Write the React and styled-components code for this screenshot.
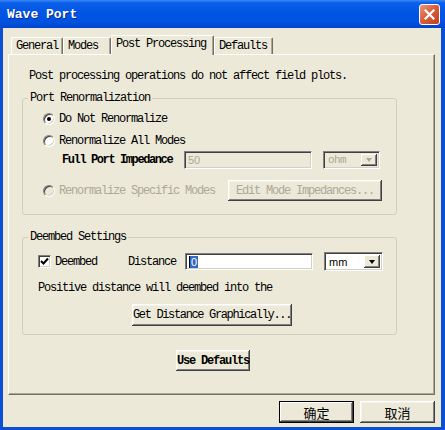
import React from 'react'
import styled, { createGlobalStyle } from 'styled-components'

const GlobalStyle = createGlobalStyle`
  html, body {
    margin: 0;
    padding: 0;
    background: #0a4fd6;
  }
  body {
    width: 445px;
    height: 430px;
    overflow: hidden;
  }
  * { box-sizing: border-box; }
`

const mono = `"Liberation Mono", "DejaVu Sans Mono", monospace`
const beige = '#ECE9D8'
const grey = '#ACA899'

const Window = styled.div`
  width: 445px;
  height: 430px;
  display: flex;
  flex-direction: column;
  background: #0a4fd6;
`

const TitleBar = styled.div`
  height: 28px;
  flex: none;
  display: flex;
  align-items: center;
  justify-content: space-between;
  padding: 1px 5px 0 7px;
  background: linear-gradient(to bottom, #3b8cf8 0%, #0b5fe9 10%, #0055e5 45%, #0052df 80%, #0043cc 100%);
`

const Title = styled.span`
  font-family: ${mono};
  font-weight: bold;
  font-size: 13px;
  color: #fff;
  text-shadow: 1px 1px #0b2a8c;
`

const CloseButton = styled.div`
  width: 21px;
  height: 21px;
  border: 1px solid #fff;
  border-radius: 3px;
  background: linear-gradient(135deg, #e9977c 0%, #d9603e 45%, #c33d1d 100%);
  display: flex;
  align-items: center;
  justify-content: center;
`

const Frame = styled.div`
  flex: 1;
  display: flex;
  padding: 0 5px 3px 3px;
`

const Body = styled.div`
  flex: 1;
  background: ${beige};
  display: flex;
  flex-direction: column;
  padding: 7px 6px 0 5px;
`

const TabStrip = styled.div`
  display: flex;
  align-items: flex-end;
  height: 19px;
  padding-left: 3px;
`

const Tab = styled.div`
  width: ${p => p.$w}px;
  height: ${p => (p.$active ? 20 : 17)}px;
  margin-bottom: ${p => (p.$active ? -1 : 0)}px;
  position: relative;
  z-index: ${p => (p.$active ? 1 : 0)};
  background: ${beige};
  border-top: 1px solid #fff;
  border-left: 1px solid #fff;
  border-right: 1px solid #716f64;
  border-radius: 2px 2px 0 0;
  box-shadow: inset -1px 0 #aca899;
  font-family: ${mono};
  font-size: 12px;
  letter-spacing: -1.2px;
  line-height: ${p => (p.$active ? 17 : 17)}px;
  padding-left: 4px;
  color: #000;
  white-space: nowrap;
`

const Panel = styled.div`
  height: 341px;
  flex: none;
  border: 1px solid;
  border-color: #fff #716f64 #716f64 #fff;
  box-shadow: inset -1px -1px #aca899;
  padding: 14px 0 0 13px;
  display: flex;
  flex-direction: column;
  width: 427px;
`

const Text = styled.div`
  font-family: ${mono};
  font-size: 12px;
  letter-spacing: ${p => p.$ls || '-1.2px'};
  line-height: 14px;
  height: 14px;
  white-space: nowrap;
  color: ${p => (p.$disabled ? grey : '#000')};
  font-weight: ${p => (p.$bold ? 'bold' : 'normal')};
`

const Intro = styled(Text)`
  padding-left: 7px;
`

const Group = styled.fieldset`
  width: 375px;
  margin: ${p => p.$mt}px 0 0 0;
  border: 1px solid #d0d0bf;
  border-radius: 3px;
  padding: ${p => p.$pt}px 0 ${p => p.$pb}px 0;
  min-width: 0;
`

const Legend = styled.legend`
  font-family: ${mono};
  font-size: 12px;
  letter-spacing: -1.2px;
  line-height: 14px;
  padding: 0 2px;
  margin-left: 5px;
  color: #000;
`

const GroupBody = styled.div`
  display: flex;
  flex-direction: column;
  padding-left: ${p => p.$pl}px;
`

const Row = styled.div`
  display: flex;
  align-items: center;
  height: ${p => p.$h}px;
  margin-top: ${p => p.$mt || 0}px;
  padding-left: ${p => p.$pl || 0}px;
`

const RadioCircle = styled.span`
  width: 12px;
  height: 12px;
  flex: none;
  border-radius: 50%;
  border: 1px solid;
  border-color: #808080 #fff #fff #808080;
  box-shadow: inset 1px 1px #404040, inset -1px -1px #d4d0c8;
  background: ${p => (p.$disabled ? beige : '#fff')};
  display: flex;
  align-items: center;
  justify-content: center;
  margin-right: 4px;
`

const Dot = styled.span`
  width: 4px;
  height: 4px;
  border-radius: 50%;
  background: #000;
`

const CheckBox = styled.span`
  width: 13px;
  height: 13px;
  flex: none;
  border: 1px solid;
  border-color: #808080 #fff #fff #808080;
  box-shadow: inset 1px 1px #404040, inset -1px -1px #d4d0c8;
  background: #fff;
  display: flex;
  align-items: center;
  justify-content: center;
  margin-right: 4px;
`

const Label = styled(Text)`
  width: ${p => p.$w}px;
  margin-right: ${p => p.$mr || 0}px;
  margin-left: ${p => p.$ml || 0}px;
  flex: none;
`

const Field = styled.div`
  width: ${p => p.$w}px;
  height: ${p => p.$h}px;
  margin-left: ${p => p.$ml || 0}px;
  flex: none;
  border: 1px solid;
  border-color: #808080 #fff #fff #808080;
  box-shadow: inset 1px 1px #404040, inset -1px -1px #d4d0c8;
  background: ${p => (p.$disabled ? beige : '#fff')};
  display: flex;
  align-items: center;
  padding: 0 3px;
  font-family: "Liberation Sans", Arial, sans-serif;
  font-size: 11px;
  color: ${p => (p.$disabled ? grey : '#000')};
`

const Selected = styled.span`
  background: #316ac5;
  color: #fff;
  line-height: 12px;
  padding: 0 1px;
  border-left: 1px solid #000;
`

const Combo = styled(Field)`
  padding: 2px 2px 2px 4px;
  justify-content: space-between;
  font-family: ${p => (p.$monoText ? mono : '"Liberation Sans", Arial, sans-serif')};
  letter-spacing: ${p => (p.$monoText ? '-0.6px' : 'normal')};
`

const DropButton = styled.span`
  width: 16px;
  height: 100%;
  flex: none;
  background: ${beige};
  box-shadow: inset -1px -1px #404040, inset 1px 1px #fff, inset -2px -2px #808080;
  display: flex;
  align-items: center;
  justify-content: center;
`

const Arrow = styled.span`
  width: 0;
  height: 0;
  border-left: 3.5px solid transparent;
  border-right: 3.5px solid transparent;
  border-top: 4px solid ${p => (p.$disabled ? grey : '#000')};
`

const Button = styled.div`
  width: ${p => p.$w}px;
  height: ${p => p.$h || 21}px;
  margin-left: ${p => p.$ml || 0}px;
  flex: none;
  background: ${beige};
  border: ${p => (p.$default ? '1px solid #000' : 'none')};
  box-shadow: ${p =>
    p.$default
      ? 'inset -1px -1px #404040, inset 1px 1px #fff, inset -2px -2px #808080'
      : 'inset -1px -1px #404040, inset 1px 1px #fff, inset -2px -2px #808080, inset 2px 2px #f4f2e8'};
  display: flex;
  align-items: center;
  justify-content: center;
  white-space: nowrap;
  font-family: ${p => (p.$cjk ? '"Noto Sans CJK SC", sans-serif' : mono)};
  font-size: ${p => (p.$cjk ? 13 : 12)}px;
  letter-spacing: ${p => (p.$cjk ? '0' : p.$ls || '-1.2px')};
  font-weight: ${p => (p.$bold ? 'bold' : 'normal')};
  color: ${p => (p.$disabled ? grey : '#000')};
`

const Footer = styled.div`
  display: flex;
  justify-content: flex-end;
  gap: 6px;
  margin-top: 6px;
`

function Radio({ checked, disabled, children }) {
  return (
    <>
      <RadioCircle $disabled={disabled}>{checked && <Dot />}</RadioCircle>
      <Text $disabled={disabled}>{children}</Text>
    </>
  )
}

export default function App() {
  return (
    <>
      <GlobalStyle />
      <Window>
        <TitleBar>
          <Title>Wave Port</Title>
          <CloseButton>
            <svg width="11" height="11" viewBox="0 0 11 11">
              <path d="M1.5 1.5 L9.5 9.5 M9.5 1.5 L1.5 9.5" stroke="#fff" strokeWidth="2.2" strokeLinecap="square" />
            </svg>
          </CloseButton>
        </TitleBar>
        <Frame>
          <Body>
            <TabStrip>
              <Tab $w={52}>General</Tab>
              <Tab $w={48}>Modes</Tab>
              <Tab $w={103} $active>Post Processing</Tab>
              <Tab $w={59}>Defaults</Tab>
            </TabStrip>
            <Panel>
              <Intro>Post processing operations do not affect field plots.</Intro>

              <Group $mt={8} $pt={5} $pb={13}>
                <Legend>Port Renormalization</Legend>
                <GroupBody $pl={20}>
                  <Row $h={18}>
                    <Radio checked>Do Not Renormalize</Radio>
                  </Row>
                  <Row $h={18} $mt={4}>
                    <Radio>Renormalize All Modes</Radio>
                  </Row>
                  <Row $h={18} $mt={1} $pl={19}>
                    <Label $w={112} $mr={10} $bold $ls="-1.4px">Full Port Impedance</Label>
                    <Field $w={128} $h={18} $disabled>50</Field>
                    <Combo $w={57} $h={18} $ml={11} $disabled $monoText>
                      ohm
                      <DropButton><Arrow $disabled /></DropButton>
                    </Combo>
                  </Row>
                  <Row $h={21} $mt={11}>
                    <Radio disabled>Renormalize Specific Modes</Radio>
                    <Button $w={154} $ml={13} $disabled>Edit Mode Impedances...</Button>
                  </Row>
                </GroupBody>
              </Group>

              <Group $mt={15} $pt={8} $pb={8}>
                <Legend>Deembed Settings</Legend>
                <GroupBody $pl={15}>
                  <Row $h={19}>
                    <CheckBox>
                      <svg width="9" height="9" viewBox="0 0 9 9">
                        <path d="M1 4 L3.5 6.5 L8 1.5" stroke="#000" strokeWidth="2" fill="none" />
                      </svg>
                    </CheckBox>
                    <Label $w={42}>Deembed</Label>
                    <Label $w={48} $ml={31}>Distance</Label>
                    <Field $w={128} $h={17} $ml={9}>
                      <Selected>0</Selected>
                    </Field>
                    <Combo $w={59} $h={19} $ml={11}>
                      mm
                      <DropButton><Arrow /></DropButton>
                    </Combo>
                  </Row>
                  <Row $h={14} $mt={10}>
                    <Text>Positive distance will deembed into the</Text>
                  </Row>
                  <Row $h={22} $mt={9}>
                    <Button $w={160} $h={22} $ml={94} $ls="-1.35px">Get Distance Graphically...</Button>
                  </Row>
                </GroupBody>
              </Group>

              <Row $h={21} $mt={15}>
                <Button $w={74} $ml={154} $bold>Use Defaults</Button>
              </Row>
            </Panel>
            <Footer>
              <Button $w={75} $h={22} $cjk $default>确定</Button>
              <Button $w={75} $h={22} $cjk>取消</Button>
            </Footer>
          </Body>
        </Frame>
      </Window>
    </>
  )
}
